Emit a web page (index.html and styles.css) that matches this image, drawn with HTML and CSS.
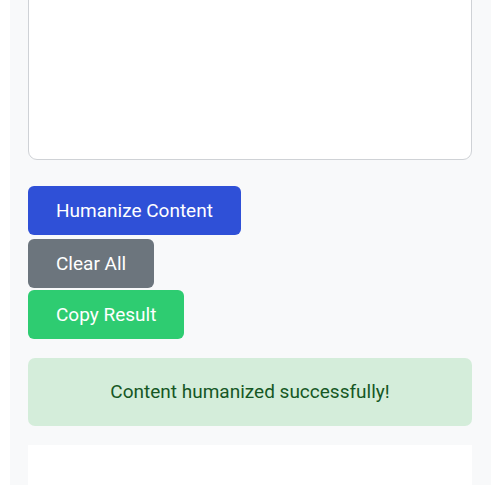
FILE: index.html
```html
<!DOCTYPE html>
<html>
<head>
    <link rel="stylesheet" href="styles.css">
</head>
<body>
    <div class="container">
        <textarea class="input-box"></textarea>

        <div class="actions">
            <button class="btn btn-primary">Humanize Content</button>
            <button class="btn btn-secondary">Clear All</button>
            <button class="btn btn-success">Copy Result</button>
        </div>

        <div class="message success">Content humanized successfully!</div>

        <div class="output-box"></div>
    </div>
</body>
</html>
```

FILE: styles.css
```css
body {
    margin: 0;
    background: #ffffff;
    font-family: Roboto, "Liberation Sans", sans-serif;
    overflow: hidden;
}

.container {
    margin: -41px 0 0 10px;
    width: 481px;
    box-sizing: border-box;
    padding: 0 19px 40px 18px;
    background: #f8f9fa;
}

.input-box {
    display: block;
    width: 100%;
    height: 201px;
    box-sizing: border-box;
    border: 1px solid #cfd2d6;
    border-radius: 9px;
    background: #ffffff;
    resize: none;
}

.actions {
    display: flex;
    flex-direction: column;
    align-items: flex-start;
    margin-top: 26px;
}

.btn {
    border: none;
    border-radius: 6px;
    color: #ffffff;
    font-family: Roboto, "Liberation Sans", sans-serif;
    font-size: 19px;
    line-height: 21px;
    padding: 14px 28px;
    cursor: pointer;
}

.btn-primary {
    background: #2f50d7;
    margin-bottom: 4px;
}

.btn-secondary {
    background: #6c757d;
    margin-bottom: 2px;
}

.btn-success {
    background: #2ecc71;
}

.message {
    margin-top: 19px;
    padding: 20px;
    border-radius: 7px;
    font-size: 19px;
    line-height: 28px;
    text-align: center;
}

.success {
    background: #d4edda;
    color: #155724;
}

.output-box {
    margin-top: 19px;
    height: 120px;
    background: #ffffff;
}
```
